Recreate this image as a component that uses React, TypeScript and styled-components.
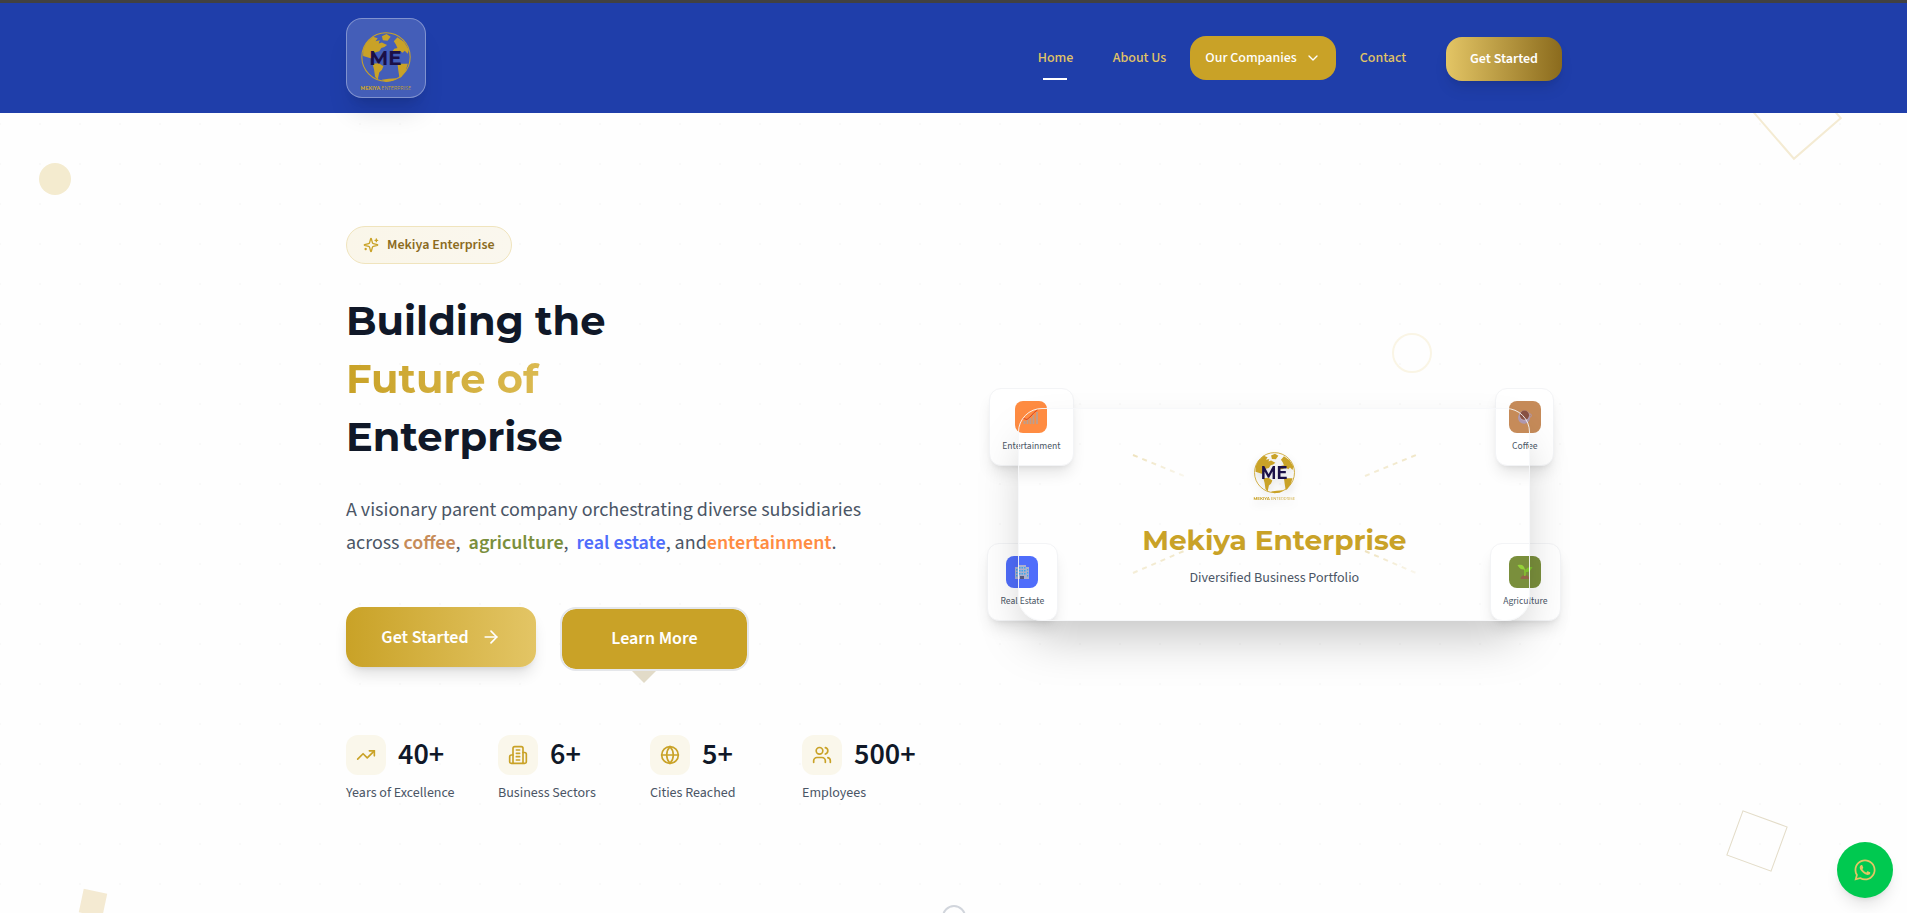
import React from 'react';
import styled, { createGlobalStyle, css } from 'styled-components';
import { ChevronDown, ArrowRight, TrendingUp, Globe, Users } from 'lucide-react';
import { FaWhatsapp } from 'react-icons/fa';

const GOLD = '#c9a227';
const LIGHT_GOLD = '#e3c565';
const BROWN = '#8b6b1d';
const SANS = "'Source Sans 3', 'Source Sans Pro', 'Noto Sans CJK SC', sans-serif";

const GlobalStyle = createGlobalStyle`
  * { box-sizing: border-box; }
  html, body { margin: 0; padding: 0; overflow: hidden; }
  body {
    font-family: ${SANS};
    -webkit-font-smoothing: antialiased;
    color: #101828;
  }
`;

const Page = styled.div`
  position: relative;
  height: 913px;
  overflow: hidden;
  display: flex;
  flex-direction: column;
  border-top: 3px solid #414141;
  background-color: #fefefe;
  background-image: radial-gradient(circle at 20px 20px, rgba(0, 0, 0, 0.02) 1px, transparent 1.5px);
  background-size: 40px 40px;
  background-position: 20px 21px;
`;

const Container = styled.div`
  width: 1280px;
  margin: 0 auto;
  padding: 0 31.5px 0 32.5px;
`;

const Header = styled.header`
  position: relative;
  z-index: 2;
  height: 110px;
  flex: none;
  background: #1f3eaa;
`;

const HeaderRow = styled(Container)`
  display: flex;
  align-items: center;
  justify-content: space-between;
  height: 110px;
`;

const LogoBox = styled.div`
  width: 80px;
  height: 80px;
  display: flex;
  align-items: center;
  justify-content: center;
  border-radius: 16px;
  border: 1px solid rgba(255, 255, 255, 0.32);
  background: rgba(255, 255, 255, 0.17);
  box-shadow: 0 20px 25px -5px rgba(0, 0, 0, 0.1), 0 8px 10px -6px rgba(0, 0, 0, 0.1);
  padding-top: 8px;
`;

const Nav = styled.nav`
  display: flex;
  align-items: center;
  gap: 8px;
`;

const NavItem = styled.a<{ $active?: boolean; $filled?: boolean; $w: number }>`
  position: relative;
  display: flex;
  align-items: center;
  justify-content: center;
  gap: 8px;
  width: ${p => p.$w}px;
  height: 44px;
  border-radius: 16px;
  font-size: 14px;
  font-weight: 500;
  white-space: nowrap;
  color: ${p => (p.$filled ? '#fff' : LIGHT_GOLD)};
  background: ${p => (p.$filled ? GOLD : 'transparent')};
  ${p =>
    p.$active &&
    css`
      &::after {
        content: '';
        position: absolute;
        bottom: 0;
        left: 50%;
        width: 24px;
        height: 2px;
        margin-left: -12.6px;
        background: #fff;
      }
    `}
`;

const HeaderCta = styled.button`
  width: 116px;
  height: 44px;
  margin: 2px 0 0 16px;
  border: 0;
  padding: 0;
  border-radius: 16px;
  font: 600 14px ${SANS};
  color: #fff;
  background: linear-gradient(90deg, ${LIGHT_GOLD}, ${BROWN});
  box-shadow: 0 10px 15px -3px rgba(0, 0, 0, 0.1), 0 4px 6px -4px rgba(0, 0, 0, 0.1);
`;

const Hero = styled(Container)`
  position: relative;
  flex: 1;
  display: grid;
  grid-template-columns: 576px 576px;
  gap: 64px;
`;

const Copy = styled.div`
  display: flex;
  flex-direction: column;
  align-items: flex-start;
  padding-top: 113px;
`;

const Badge = styled.div`
  display: flex;
  align-items: center;
  gap: 8px;
  width: 166px;
  height: 38px;
  padding-left: 16px;
  border-radius: 19px;
  border: 1px solid #f0e4bd;
  background: linear-gradient(90deg, #faf6e9, #faf7ee);
  color: ${BROWN};
  font-size: 14px;
  font-weight: 600;
  white-space: nowrap;
  svg { color: ${GOLD}; flex: none; }
`;

const Heading = styled.h1`
  margin: 28px 0 0;
  font: 700 40px/58px Montserrat, Inter, sans-serif;
  color: #101828;
`;

const HeadLine = styled.span<{ $gold?: boolean }>`
  display: block;
  width: 288px;
  white-space: nowrap;
  ${p =>
    p.$gold &&
    css`
      color: transparent;
      background: linear-gradient(90deg, ${GOLD}, ${LIGHT_GOLD});
      background-clip: text;
      -webkit-background-clip: text;
    `}
`;

const Lead = styled.p`
  margin: 28px 0 0;
  height: 66px;
  font-size: 20px;
  line-height: 33px;
  color: #4a5565;
  white-space: nowrap;
`;

const Sector = styled.span<{ $color: string }>`
  font-weight: 600;
  color: ${p => p.$color};
`;

const Actions = styled.div`
  display: flex;
  align-items: flex-start;
  gap: 24px;
  margin-top: 47px;
`;

const PrimaryButton = styled.button`
  display: flex;
  align-items: center;
  justify-content: center;
  gap: 12px;
  width: 190px;
  height: 60px;
  border: 0;
  padding: 0;
  border-radius: 16px;
  font: 600 18px ${SANS};
  color: #fff;
  background: linear-gradient(90deg, ${GOLD}, ${LIGHT_GOLD});
  box-shadow: 0 10px 15px -3px rgba(0, 0, 0, 0.12), 0 4px 6px -4px rgba(0, 0, 0, 0.12);
`;

const SecondaryButton = styled.button`
  position: relative;
  width: 189px;
  height: 64px;
  padding: 0 0 1px;
  border: 2px solid #e5e7eb;
  border-radius: 16px;
  font: 600 18px ${SANS};
  color: #fff;
  background: ${GOLD};
  background-clip: padding-box;
  &::after {
    content: '';
    position: absolute;
    left: 70px;
    top: 62px;
    border: 12px solid transparent;
    border-top-color: #e2dbc8;
    border-bottom: 0;
  }
`;

const Stats = styled.div`
  display: grid;
  grid-template-columns: repeat(4, 152px);
  margin-top: 64px;
`;

const StatTop = styled.div`
  display: flex;
  align-items: center;
  gap: 12px;
  height: 40px;
`;

const StatIcon = styled.span`
  display: flex;
  align-items: center;
  justify-content: center;
  width: 40px;
  height: 40px;
  border-radius: 12px;
  color: ${GOLD};
  background: #faf7eb;
`;

const StatValue = styled.span`
  font-size: 30px;
  line-height: 40px;
  font-weight: 600;
`;

const StatLabel = styled.div`
  margin-top: 8px;
  font-size: 14px;
  line-height: 20px;
  color: #4a5565;
  white-space: nowrap;
`;

const Visual = styled.div`
  position: relative;
`;

const Tile = styled.div<{ $x: number; $y: number; $w: number }>`
  position: absolute;
  left: ${p => p.$x}px;
  top: ${p => p.$y}px;
  width: ${p => p.$w}px;
  height: 78px;
  display: flex;
  flex-direction: column;
  align-items: center;
  padding-top: 12px;
  border: 1px solid #f3f4f6;
  border-radius: 12px;
  background: #fff;
  box-shadow: 0 10px 15px -3px rgba(0, 0, 0, 0.1), 0 4px 6px -4px rgba(0, 0, 0, 0.1);
`;

const TileIcon = styled.div<{ $color: string }>`
  display: flex;
  align-items: center;
  justify-content: center;
  width: 32px;
  height: 32px;
  border-radius: 8px;
  background: ${p => p.$color};
  svg { opacity: 0.8; }
`;

const TileLabel = styled.div`
  margin-top: 5px;
  font-size: 9.6px;
  line-height: 16px;
  color: #4a5565;
`;

const Card = styled.div`
  position: absolute;
  left: 32.3px;
  top: 295px;
  width: 512px;
  height: 213px;
  display: flex;
  flex-direction: column;
  align-items: center;
  padding-top: 43px;
  border: 1px solid rgba(246, 247, 249, 0.9);
  border-radius: 24px;
  box-shadow: 0 25px 50px -12px rgba(0, 0, 0, 0.25);
`;

const CardLogo = styled.div`
  height: 50px;
  filter: drop-shadow(0 4px 4px rgba(0, 0, 0, 0.12));
`;

const CardTitle = styled.h2`
  margin: 18px 0 0;
  font: 700 28px/40px Montserrat, Inter, sans-serif;
  color: ${GOLD};
  white-space: nowrap;
`;

const CardText = styled.div`
  margin-top: 7px;
  font-size: 14px;
  line-height: 22px;
  color: #4a5565;
`;

const Rays = styled.svg`
  position: absolute;
  left: 146px;
  top: 341px;
`;

const Shape = styled.div<{ $x: number; $y: number; $size: number; $rotate?: number; $round?: boolean; $fill?: string; $line?: string }>`
  position: absolute;
  left: ${p => p.$x}px;
  top: ${p => p.$y - 3}px;
  width: ${p => p.$size}px;
  height: ${p => p.$size}px;
  transform: rotate(${p => p.$rotate || 0}deg);
  border-radius: ${p => (p.$round ? '50%' : '0')};
  background: ${p => p.$fill || 'transparent'};
  border: ${p => p.$line || '0'};
`;

const ChatButton = styled.a`
  position: absolute;
  right: 14px;
  bottom: 15px;
  width: 56px;
  height: 56px;
  display: flex;
  align-items: center;
  justify-content: center;
  border-radius: 50%;
  color: ${LIGHT_GOLD};
  background: #00c950;
  box-shadow: 0 10px 15px -3px rgba(0, 0, 0, 0.1), 0 4px 6px -4px rgba(0, 0, 0, 0.1);
`;

function Logo({ width }: { width: number }) {
  return (
    <svg width={width} height={width * 1.16} viewBox="0 0 100 116">
      <circle cx="50" cy="48" r="46.5" fill="none" stroke={GOLD} strokeWidth="2" />
      <g fill={GOLD}>
        <path d="M6 34 12 21 25 9 34 12 30 18 38 16 36 22 42 20 52 25 47 29 41 31 37 37 30 39 24 45 22 51 6 46Z" />
        <path d="M24 61 36 60 45 66 42 73 37 78 34 92 29 86 27 72Z" />
        <path d="M42 8 51 4 59 9 53 17 44 16Z" />
        <path d="M65 18 72 10 85 19 94 34 92 42 86 36 82 40 76 36 68 40 60 40 66 32 72 31 69 24Z" />
        <path d="M72 61 92 61 88 74 80 86 76 89 74 76Z" />
        <path d="M42 92 55 90 71 89 63 94 50 96Z" />
      </g>
      <text x="49" y="63" textAnchor="middle" textLength="62" lengthAdjust="spacingAndGlyphs" fontFamily="Montserrat, Inter, sans-serif" fontWeight="700" fontSize="40" fill="#1b1048">ME</text>
      <text x="1" y="112" textLength="38" lengthAdjust="spacingAndGlyphs" fontFamily="Montserrat, Inter, sans-serif" fontWeight="700" fontSize="10" fill={GOLD}>MEKIYA</text>
      <text x="41" y="112" textLength="57" lengthAdjust="spacingAndGlyphs" fontFamily="Montserrat, Inter, sans-serif" fontWeight="400" fontSize="10" fill={GOLD}>ENTERPRISE</text>
    </svg>
  );
}

const LineIcon = styled.svg.attrs({ viewBox: '0 0 24 24', fill: 'none', stroke: 'currentColor', strokeWidth: 2, strokeLinecap: 'round', strokeLinejoin: 'round' })<{ $size: number }>`
  width: ${p => p.$size}px;
  height: ${p => p.$size}px;
`;

const Sparkles = () => (
  <LineIcon $size={16}>
    <path d="M9.937 15.5A2 2 0 0 0 8.5 14.063l-6.135-1.582a.5.5 0 0 1 0-.962L8.5 9.936A2 2 0 0 0 9.937 8.5l1.582-6.135a.5.5 0 0 1 .963 0L14.063 8.5A2 2 0 0 0 15.5 9.937l6.135 1.581a.5.5 0 0 1 0 .964L15.5 14.063a2 2 0 0 0-1.437 1.437l-1.582 6.135a.5.5 0 0 1-.963 0z" />
    <path d="M20 3v4M22 5h-4M4 17v2M5 18H3" />
  </LineIcon>
);

const Building = () => (
  <LineIcon $size={20}>
    <path d="M6 22V4a2 2 0 0 1 2-2h8a2 2 0 0 1 2 2v18Z" />
    <path d="M6 12H4a2 2 0 0 0-2 2v6a2 2 0 0 0 2 2h2M18 9h2a2 2 0 0 1 2 2v9a2 2 0 0 1-2 2h-2M10 6h4M10 10h4M10 14h4M10 18h4" />
  </LineIcon>
);

const ChartGlyph = () => (
  <svg width="16" height="16" viewBox="0 0 16 16">
    <path d="M1.5 12v3M4.5 10.5V15M7.5 9v6M10.5 6v9M14 3v12" stroke="#a9a3a3" strokeWidth="1.8" />
    <path d="M.5 9.5 4 10.5 8 7l3-3.5 3.5-2.5" fill="none" stroke="#c8321f" strokeWidth="1" />
  </svg>
);

const OfficeGlyph = () => (
  <svg width="16" height="16" viewBox="0 0 16 16">
    <path d="M1 3h3V1h8v2h3v12H1z" fill="#c4c1c4" />
    <path d="M5 3h1.5v1.5H5zM7.5 3H9v1.5H7.5zM10 3h1.5v1.5H10zM5 6h1.5v1.5H5zM7.5 6H9v1.5H7.5zM10 6h1.5v1.5H10zM5 9h1.5v1.5H5zM7.5 9H9v1.5H7.5zM10 9h1.5v1.5H10zM2 5h1.5v1.5H2zM2 8h1.5v1.5H2zM2 11h1.5v1.5H2zM13 5h1.2v1.5H13zM13 8h1.2v1.5H13zM13 11h1.2v1.5H13z" fill="#35b7e6" />
    <path d="M6 12h4v3H6z" fill="#5a5560" />
  </svg>
);

const CoffeeGlyph = () => (
  <svg width="16" height="16" viewBox="0 0 16 16">
    <circle cx="7" cy="8.8" r="6" fill="#a99bc4" />
    <circle cx="12.8" cy="6.5" r="1.6" fill="none" stroke="#a99bc4" strokeWidth="1" />
    <circle cx="7.5" cy="6.6" r="5.2" fill="#b9add0" />
    <circle cx="7.5" cy="6.2" r="4.6" fill="#7c4440" />
  </svg>
);

const SeedlingGlyph = () => (
  <svg width="16" height="16" viewBox="0 0 16 16">
    <path d="M3.5 15C4 9.5 12 9.5 12.5 15Z" fill="#9a5b4c" />
    <path d="M7.8 12C8.3 9 8 7 7.7 5" fill="none" stroke="#8bd42c" strokeWidth="1.5" />
    <path d="M.5 1.2C5-.4 7.5 2 7.8 5.5 4 6 2.5 4 .5 1.2Z" fill="#9be33a" />
    <path d="M15.5 3.2C11.5 2 8.5 4.5 8 8 12.5 8.5 13.5 6 15.5 3.2Z" fill="#7fcf2c" />
  </svg>
);

const tiles = [
  { label: 'Entertainment', color: '#ff8c42', x: 3, y: 275, w: 84.7, Glyph: ChartGlyph },
  { label: 'Coffee', color: '#c68b59', x: 509.4, y: 275, w: 58.8, Glyph: CoffeeGlyph },
  { label: 'Real Estate', color: '#4f6dfb', x: 1, y: 430, w: 70.6, Glyph: OfficeGlyph },
  { label: 'Agriculture', color: '#7a8f3c', x: 504, y: 430, w: 70.6, Glyph: SeedlingGlyph },
];

const stats = [
  { value: '40+', label: 'Years of Excellence', icon: <TrendingUp size={20} /> },
  { value: '6+', label: 'Business Sectors', icon: <Building /> },
  { value: '5+', label: 'Cities Reached', icon: <Globe size={20} /> },
  { value: '500+', label: 'Employees', icon: <Users size={20} /> },
];

export default function App() {
  return (
    <Page>
      <GlobalStyle />
      <Shape $x={1764.5} $y={83} $size={64} $rotate={49} $line="2px solid #f4ebd3" />
      <Shape $x={39} $y={163} $size={32} $round $fill="#f4ebcf" />
      <Shape $x={1392} $y={333} $size={40} $round $line="2px solid #faf5e5" />
      <Shape $x={1732.6} $y={817} $size={48} $rotate={20} $line="1px solid #e3dcc8" />
      <Shape $x={80.6} $y={891} $size={24} $rotate={12} $fill="#f4ead2" />
      <Header>
        <HeaderRow>
          <LogoBox><Logo width={52} /></LogoBox>
          <Nav>
            <NavItem $w={67} $active>Home</NavItem>
            <NavItem $w={85}>About Us</NavItem>
            <NavItem $w={146} $filled>Our Companies<ChevronDown size={16} /></NavItem>
            <NavItem $w={78}>Contact</NavItem>
            <HeaderCta>Get Started</HeaderCta>
          </Nav>
        </HeaderRow>
      </Header>
      <Hero>
        <Copy>
          <Badge><Sparkles />Mekiya Enterprise</Badge>
          <Heading>
            <HeadLine>Building the</HeadLine>
            <HeadLine $gold>Future of</HeadLine>
            <HeadLine>Enterprise</HeadLine>
          </Heading>
          <Lead>
            A visionary parent company orchestrating diverse subsidiaries<br />
            across <Sector $color="#c68b59">coffee</Sector>,&nbsp; <Sector $color="#7a8f3c">agriculture</Sector>,&nbsp;{' '}
            <Sector $color="#4f6dfb">real estate</Sector>, and<Sector $color="#ff8c42">entertainment</Sector>.
          </Lead>
          <Actions>
            <PrimaryButton>Get Started<ArrowRight size={20} /></PrimaryButton>
            <SecondaryButton>Learn More</SecondaryButton>
          </Actions>
          <Stats>
            {stats.map(({ value, label, icon }) => (
              <div key={label}>
                <StatTop>
                  <StatIcon>{icon}</StatIcon>
                  <StatValue>{value}</StatValue>
                </StatTop>
                <StatLabel>{label}</StatLabel>
              </div>
            ))}
          </Stats>
        </Copy>
        <Visual>
          {tiles.map(({ label, color, x, y, w, Glyph }) => (
            <Tile key={label} $x={x} $y={y} $w={w}>
              <TileIcon $color={color}><Glyph /></TileIcon>
              <TileLabel>{label}</TileLabel>
            </Tile>
          ))}
          <Card>
            <CardLogo><Logo width={43} /></CardLogo>
            <CardTitle>Mekiya Enterprise</CardTitle>
            <CardText>Diversified Business Portfolio</CardText>
          </Card>
          <Rays width="286" height="122" viewBox="0 0 286 122" fill="none" strokeWidth="2" strokeDasharray="5 5">
            <defs>
              <linearGradient id="fadeOut"><stop stopColor={GOLD} stopOpacity=".3" /><stop offset="1" stopColor={GOLD} stopOpacity=".08" /></linearGradient>
              <linearGradient id="fadeIn"><stop stopColor={GOLD} stopOpacity=".18" /><stop offset="1" stopColor={GOLD} stopOpacity=".25" /></linearGradient>
            </defs>
            <path d="M1 1 52 22" stroke="url(#fadeOut)" />
            <path d="M1 119 52 97" stroke="url(#fadeIn)" />
            <path d="M233 22 284 1" stroke="url(#fadeIn)" />
            <path d="M233 97 284 119" stroke="url(#fadeOut)" />
          </Rays>
        </Visual>
      </Hero>
      <Shape $x={942} $y={905} $size={24} $round $line="2px solid #d1d5dc" />
      <ChatButton><FaWhatsapp size={24} /></ChatButton>
    </Page>
  );
}
